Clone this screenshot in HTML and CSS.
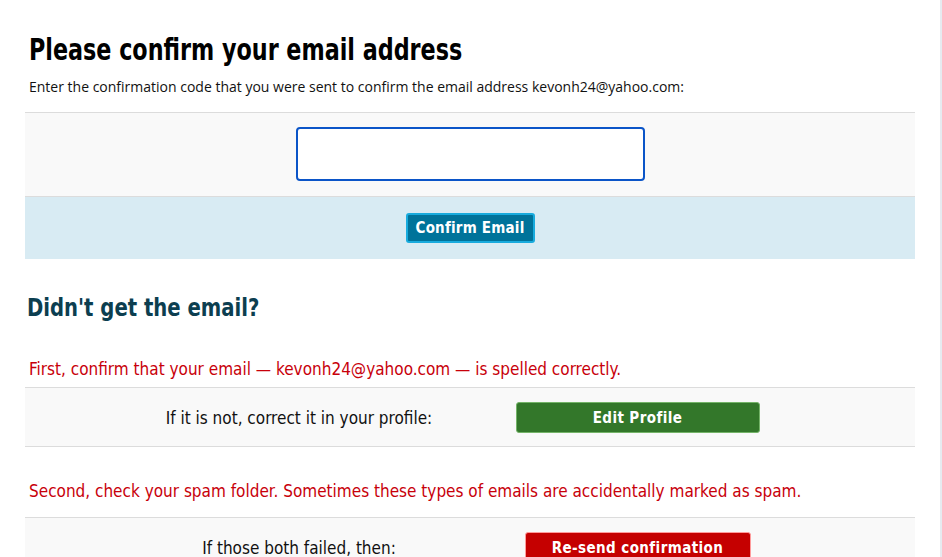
FILE: index.html
```html
<!DOCTYPE html>
<html>
<head>
<meta charset="utf-8">
<link rel="stylesheet" href="styles.css">
</head>
<body>
<div class="page">
  <div class="content">
    <h1 class="title">Please confirm your email address</h1>
    <p class="intro">Enter the confirmation code that you were sent to confirm the email address kevonh24@yahoo.com:</p>
    <div class="code-strip">
      <input class="code-input" type="text">
    </div>
    <div class="action-band">
      <button class="btn btn-blue">Confirm Email</button>
    </div>
    <h2 class="subtitle">Didn't get the email?</h2>
    <p class="warn warn-first">First, confirm that your email — kevonh24@yahoo.com — is spelled correctly.</p>
    <div class="step-row">
      <div class="step-label">If it is not, correct it in your profile:</div>
      <div class="step-action"><button class="btn btn-green">Edit Profile</button></div>
    </div>
    <p class="warn warn-second">Second, check your spam folder. Sometimes these types of emails are accidentally marked as spam.</p>
    <div class="step-row">
      <div class="step-label">If those both failed, then:</div>
      <div class="step-action"><button class="btn btn-red">Re-send confirmation</button></div>
    </div>
  </div>
  <div class="side-rail"></div>
</div>
</body>
</html>
```

FILE: styles.css
```css
html, body {
  margin: 0;
  padding: 0;
  background: #ffffff;
  overflow: hidden;
}

.page {
  display: flex;
  height: 557px;
  font-family: "Open Sans", "Liberation Sans", sans-serif;
  color: #111;
}

.content {
  margin-left: 25px;
  width: 890px;
}

.side-rail {
  margin-left: 25px;
  width: 2px;
  background: #e6ebf0;
}

.title {
  margin: 31px 0 0 4px;
  font-family: "DejaVu Sans Condensed", "DejaVu Sans", sans-serif;
  font-weight: 700;
  font-size: 30px;
  line-height: 38px;
  color: #000;
  transform: scaleX(0.825);
  transform-origin: left center;
  white-space: nowrap;
}

.intro {
  margin: 9px 0 0 4px;
  font-size: 14px;
  line-height: 18px;
  color: #111;
}

.code-strip {
  margin-top: 16px;
  border-top: 1px solid #dcdcdc;
  border-bottom: 1px solid #dcdcdc;
  background: #f9f9f9;
  display: flex;
  justify-content: center;
  padding: 14px 0 15px;
}

.code-input {
  box-sizing: border-box;
  width: 349px;
  height: 54px;
  border: 2px solid #0b55c8;
  border-radius: 4px;
  background: #fff;
  outline: none;
}

.action-band {
  background: #d8ebf3;
  height: 62px;
  display: flex;
  align-items: center;
  justify-content: center;
}

.btn {
  font-family: "DejaVu Sans Condensed", "DejaVu Sans", sans-serif;
  font-weight: 700;
  font-size: 15px;
  letter-spacing: 0.4px;
  color: #fff;
  cursor: pointer;
  padding: 0;
}

.btn-blue {
  width: 129px;
  height: 30px;
  background: #00739a;
  border: 2px solid #18abdd;
  border-radius: 3px;
  letter-spacing: 0.2px;
}

.btn-green {
  width: 244px;
  height: 31px;
  background: #33772a;
  border: 1px solid #74b468;
  border-radius: 3px;
}

.btn-red {
  width: 226px;
  height: 31px;
  background: #c50000;
  border: 1px solid #ff9c9c;
  border-radius: 3px;
}

.subtitle {
  margin: 34px 0 0 2px;
  font-family: "DejaVu Sans Condensed", "DejaVu Sans", sans-serif;
  font-weight: 700;
  font-size: 24px;
  line-height: 30px;
  color: #0c3e50;
  transform: scaleX(0.91);
  transform-origin: left center;
  white-space: nowrap;
}

.warn {
  margin: 0 0 0 4px;
  font-family: "DejaVu Sans Condensed", "DejaVu Sans", sans-serif;
  font-size: 17px;
  line-height: 22px;
  color: #c8000a;
}

.warn-first {
  margin-top: 35px;
  padding-bottom: 7px;
}

.warn-second {
  margin-top: 33px;
  padding-bottom: 15px;
}

.step-row {
  border-top: 1px solid #dcdcdc;
  border-bottom: 1px solid #dcdcdc;
  background: #f9f9f9;
  display: grid;
  grid-template-columns: 342px 335px;
  padding: 14px 0 13px 103px;
  align-items: center;
}

.step-label {
  text-align: center;
  font-family: "DejaVu Sans Condensed", "DejaVu Sans", sans-serif;
  font-size: 17px;
  color: #111;
}

.step-action {
  display: flex;
  justify-content: center;
}
```
